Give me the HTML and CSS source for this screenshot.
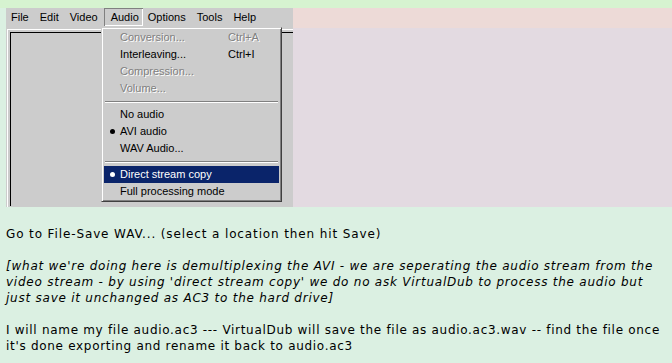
FILE: index.html
```html
<!DOCTYPE html>
<html lang="en">
<head>
    <meta charset="UTF-8">
    <title>VirtualDub - Direct stream copy</title>
    <link rel="stylesheet" href="styles.css">
</head>
<body>
    <div class="shot-row">
        <div class="vd-window">
            <div class="menubar">
                <span class="mb-item">File</span>
                <span class="mb-item">Edit</span>
                <span class="mb-item">Video</span>
                <span class="mb-item open">Audio</span>
                <span class="mb-item">Options</span>
                <span class="mb-item">Tools</span>
                <span class="mb-item">Help</span>
            </div>
            <div class="client">
                <div class="pane"></div>
            </div>
            <div class="dropdown">
                <div class="mi disabled"><span class="label">Conversion...</span><span class="key">Ctrl+A</span></div>
                <div class="mi"><span class="label">Interleaving...</span><span class="key">Ctrl+I</span></div>
                <div class="mi disabled"><span class="label">Compression...</span></div>
                <div class="mi disabled"><span class="label">Volume...</span></div>
                <div class="sep"></div>
                <div class="mi"><span class="label">No audio</span></div>
                <div class="mi checked"><span class="label">AVI audio</span></div>
                <div class="mi"><span class="label">WAV Audio...</span></div>
                <div class="sep"></div>
                <div class="mi checked active"><span class="label">Direct stream copy</span></div>
                <div class="mi"><span class="label">Full processing mode</span></div>
            </div>
        </div>
        <div class="side">
            <div class="side-top"></div>
            <div class="side-rest"></div>
        </div>
    </div>

    <div class="notes">
        <p>Go to File-Save WAV... (select a location then hit Save)</p>
        <p class="aside">[what we're doing here is demultiplexing the AVI - we are seperating the audio stream from the<br>
        video stream - by using 'direct stream copy' we do no ask VirtualDub to process the audio but<br>
        just save it unchanged as AC3 to the hard drive]</p>
        <p class="rename">I will name my file audio.ac3 --- VirtualDub will save the file as audio.ac3.wav -- find the file once<br>
        it's done exporting and rename it back to audio.ac3</p>
    </div>
</body>
</html>
```

FILE: styles.css
```css
body {
    margin: 0;
    background: #dbf0e2;
    font-family: "DejaVu Sans", Verdana, sans-serif;
    color: #000;
}

.shot-row {
    display: flex;
    padding: 8px 0 0 6px;
    background: linear-gradient(#d6f3d0 0 8px, transparent 8px);
}

/* VirtualDub window */
.vd-window {
    position: relative;
    width: 287px;
    height: 199px;
    background: #cccccc;
    font-family: "Liberation Sans", Arial, sans-serif;
    font-size: 11px;
    display: flex;
    flex-direction: column;
}

.menubar {
    display: flex;
    height: 21px;
}

.mb-item {
    height: 18px;
    line-height: 18px;
    padding: 0 6px 0 5px;
}

.mb-item.open {
    padding: 0 4px 0 7px;
    box-shadow: inset 1px 1px #808080, inset -1px -1px #fff;
}

.client {
    flex: 1;
    margin-left: 1px;
    border-top: 1px solid #fff;
    border-left: 1px solid #fff;
    padding: 2px 0 1px 2px;
    display: flex;
}

.pane {
    flex: 1;
    border-top: 1px solid #000;
    border-left: 1px solid #000;
}

.dropdown {
    position: absolute;
    left: 95px;
    top: 19px;
    width: 175px;
    padding: 1px 2px;
    background: #cccccc;
    border: 1px solid;
    border-color: #cccccc #404040 #404040 #cccccc;
    box-shadow: inset 1px 1px #fff, inset -1px -1px #808080;
}

.mi {
    position: relative;
    display: flex;
    height: 17px;
    line-height: 17px;
    padding-left: 16px;
    white-space: nowrap;
}

.mi .label {
    flex: 0 0 108px;
}

.mi.disabled {
    color: #808080;
    text-shadow: 1px 1px #fff;
}

.mi.checked::before {
    content: "";
    position: absolute;
    left: 6px;
    top: 6px;
    width: 5px;
    height: 5px;
    border-radius: 50%;
    background: #000;
}

.mi.active {
    background: #0a246a;
    color: #fff;
}

.mi.active::before {
    background: #fff;
}

.sep {
    margin: 4px 1px 3px;
    border-top: 1px solid #808080;
    border-bottom: 1px solid #fff;
}

.side {
    flex: 1;
    display: flex;
    flex-direction: column;
}

.side-top {
    height: 20px;
    background: #eddad7;
}

.side-rest {
    flex: 1;
    background: #e3dae1;
}

/* explanation text */
.notes {
    padding: 19px 2px 0 6px;
    font-size: 12px;
    line-height: 16px;
    letter-spacing: 0.88px;
    white-space: nowrap;
}

.notes p {
    margin: 0 0 16px;
}

.aside {
    font-style: italic;
    letter-spacing: 0.76px;
}

.rename {
    letter-spacing: 0.7px;
}
```
